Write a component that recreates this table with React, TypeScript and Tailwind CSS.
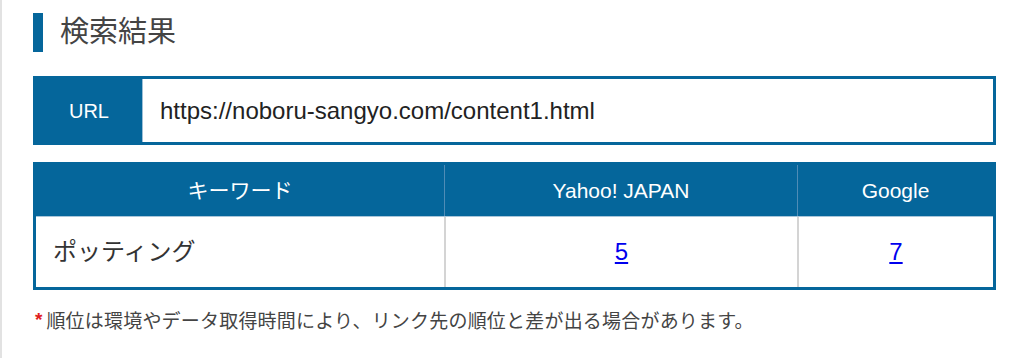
const font = 'font-["Liberation_Sans","Noto_Sans_CJK_JP",sans-serif]'

function Heading({ children }: { children: React.ReactNode }) {
  return (
    <div className="flex items-center pt-[13px]">
      <span className="h-[39px] w-[10px] bg-[#05669b]" />
      <h2 className="ml-[17px] text-[29px] leading-none text-[#444]">{children}</h2>
    </div>
  )
}

export default function App() {
  return (
    <div
      className={`${font} min-h-[358px] border-l-2 border-[#e2e2e2] bg-white pl-[31px] pr-[28px]`}
    >
      <Heading>検索結果</Heading>

      {/* URL row */}
      <div className="mt-[24px] flex h-[69px] border-[3px] border-[#05669b]">
        <div className="flex w-[106px] items-center justify-center bg-[#05669b] text-[20px] text-white">
          URL
        </div>
        <div className="flex flex-1 items-center border-l border-[#9dbfd6] pl-[17px] text-[24px] text-[#222]">
          https://noboru-sangyo.com/content1.html
        </div>
      </div>

      {/* ranking table */}
      <div className="mt-[17px] border-[3px] border-[#05669b]">
        <div className="grid h-[51px] grid-cols-[408px_353px_1fr] bg-[#05669b] text-[21px] text-white">
          <div className="flex items-center justify-center">キーワード</div>
          <div className="flex items-center justify-center border-l border-[#4f8cb6]">
            Yahoo! JAPAN
          </div>
          <div className="flex items-center justify-center border-l border-[#4f8cb6]">Google</div>
        </div>
        <div className="grid h-[71px] grid-cols-[408px_353px_1fr] border-t border-[#a9c6da] text-[24px]">
          <div className="flex items-center pl-[17px] text-[#333]">ポッティング</div>
          <div className="flex items-center justify-center border-l-2 border-[#d4d4d4]">
            <a href="#" className="text-[#0000ee] underline">
              5
            </a>
          </div>
          <div className="flex items-center justify-center border-l-2 border-[#d4d4d4]">
            <a href="#" className="text-[#0000ee] underline">
              7
            </a>
          </div>
        </div>
      </div>

      <p className="mt-[19px] flex items-start text-[19px] leading-[26px] text-[#444]">
        <span className="mr-[4px] pl-[2px] text-[19px] leading-[22px] font-bold text-[#e02020]">*</span>
        <span className="tracking-[0.2px]">
          順位は環境やデータ取得時間により、リンク先の順位と差が出る場合があります。
        </span>
      </p>
    </div>
  )
}
